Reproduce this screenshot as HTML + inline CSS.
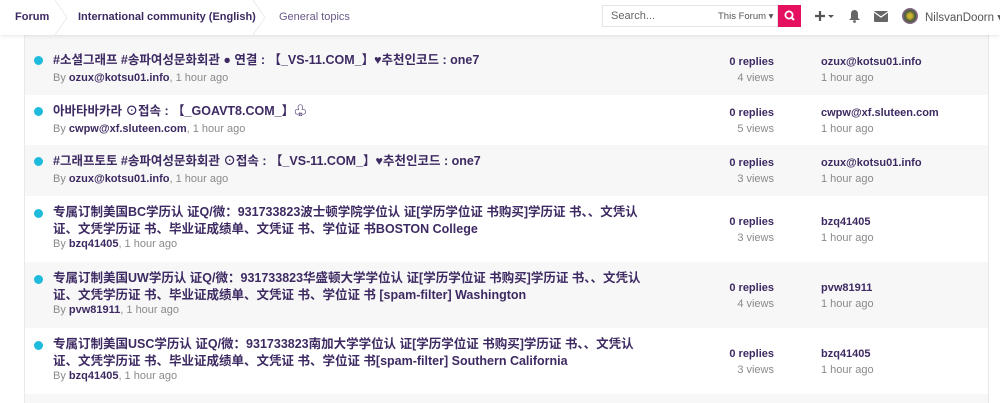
<!DOCTYPE html>
<html><head><meta charset="utf-8">
<style>
*{margin:0;padding:0;box-sizing:border-box}
body{width:1000px;height:403px;overflow:hidden;background:#fff;font-family:"Liberation Sans","Noto Sans CJK SC","NanumGothic",sans-serif;position:relative}
.hdr{position:absolute;left:0;top:0;width:1000px;height:35px;background:#fff;box-shadow:0 1px 4px rgba(0,0,0,.1);z-index:5}
.bc{position:absolute;top:11px;font-size:11px;color:#3d2a62;font-weight:bold;white-space:nowrap}
.chev{position:absolute;top:0;width:14px;height:35px}
.wrap{position:absolute;left:24px;top:35px;width:965px;height:368px;background:#f7f7f7;border-left:1px solid #e9e9e9;border-right:1px solid #e9e9e9}
.row{position:absolute;left:0;width:963px}
.g{background:#f7f7f7}.w{background:#fff}
.dot{position:absolute;left:9px;width:9px;height:9px;border-radius:50%;background:#1ebbdc}
.t{position:absolute;left:28px;width:600px;font-size:12.5px;font-weight:bold;color:#3d2a62;line-height:16.5px}
.m{position:absolute;left:28px;font-size:11px;color:#8a8a8a;white-space:nowrap}
.m b{color:#3d2a62}
.r{position:absolute;right:214px;text-align:right;font-size:11px;line-height:16px;white-space:nowrap}
.r .a{color:#3d2a62;font-weight:bold}.r .b{color:#8a8a8a}
.l{position:absolute;left:796px;font-size:11px;line-height:16px;white-space:nowrap}
.l .a{color:#3d2a62;font-weight:bold}.l .b{color:#8a8a8a}
</style></head><body>
<div class="hdr">
<div class="bc" style="left:15px">Forum</div>
<svg class="chev" style="left:54px" viewBox="0 0 14 35"><path d="M1 0 L13 17.5 L1 35" fill="none" stroke="#ececec"/></svg>
<div class="bc" style="left:78px">International community (English)</div>
<svg class="chev" style="left:252px" viewBox="0 0 14 35"><path d="M1 0 L13 17.5 L1 35" fill="none" stroke="#ececec"/></svg>
<div class="bc" style="left:279px;font-weight:normal;color:#6a5a8a">General topics</div>
<div style="position:absolute;left:602px;top:5px;width:176px;height:22px;border:1px solid #e4e4e4;background:#fff">
<span style="position:absolute;left:8px;top:4px;font-size:11px;color:#666">Search...</span>
<span style="position:absolute;left:115px;top:5px;font-size:9.5px;color:#555">This Forum ▾</span></div>
<div style="position:absolute;left:778px;top:5px;width:23px;height:22px;background:#e5105f">
<svg width="23" height="22" viewBox="0 0 23 22"><circle cx="11" cy="10" r="3.6" fill="none" stroke="#fff" stroke-width="1.8"/><path d="M13.6 12.6 L16 15" stroke="#fff" stroke-width="2"/></svg></div>
<svg style="position:absolute;left:815px;top:9px" width="22" height="14" viewBox="0 0 22 14"><path d="M5 2v10M0 7h10" stroke="#555" stroke-width="2.2"/><path d="M13 6l3 3 3-3z" fill="#555"/></svg>
<svg style="position:absolute;left:848px;top:9px" width="13" height="14" viewBox="0 0 13 14"><path d="M6.5 1C4 1 3 3 3 5v4L1 11h11l-2-2V5c0-2-1-4-3.5-4z" fill="#666"/><circle cx="6.5" cy="12.5" r="1.4" fill="#666"/></svg>
<svg style="position:absolute;left:874px;top:11px" width="14" height="11" viewBox="0 0 14 11"><rect width="14" height="11" rx="1" fill="#666"/><path d="M0 1l7 5 7-5" fill="none" stroke="#fff" stroke-width="1.2"/></svg>
<div style="position:absolute;left:902px;top:8px;width:16px;height:16px;border-radius:50%;background:radial-gradient(circle,#c8b030 20%,#4a5a3a 45%,#8a6a90 70%,#b0a040 100%)"></div>
<span style="position:absolute;left:925px;top:10px;font-size:11.5px;color:#555;white-space:nowrap">NilsvanDoorn ▾</span>
</div>

<div class="wrap">
<div class="row g" style="top:9px;height:51px">
<div class="dot" style="top:12px"></div>
<div class="t" style="top:8px">#소셜그래프 #송파여성문화회관 ● 연결 : 【_VS-11.COM_】♥추천인코드 : one7</div>
<div class="m" style="top:28px">By <b>ozux@kotsu01.info</b>, 1 hour ago</div>
<div class="r" style="top:10px"><div class="a">0 replies</div><div class="b">4 views</div></div>
<div class="l" style="top:10px"><div class="a">ozux@kotsu01.info</div><div class="b">1 hour ago</div></div>
</div>
<div class="row w" style="top:60px;height:50px">
<div class="dot" style="top:12px"></div>
<div class="t" style="top:8px">아바타바카라 ⊙접속 : 【_GOAVT8.COM_】♧</div>
<div class="m" style="top:28px">By <b>cwpw@xf.sluteen.com</b>, 1 hour ago</div>
<div class="r" style="top:10px"><div class="a">0 replies</div><div class="b">5 views</div></div>
<div class="l" style="top:10px"><div class="a">cwpw@xf.sluteen.com</div><div class="b">1 hour ago</div></div>
</div>
<div class="row g" style="top:110px;height:51px">
<div class="dot" style="top:12px"></div>
<div class="t" style="top:8px">#그래프토토 #송파여성문화회관 ⊙접속 : 【_VS-11.COM_】♥추천인코드 : one7</div>
<div class="m" style="top:28px">By <b>ozux@kotsu01.info</b>, 1 hour ago</div>
<div class="r" style="top:10px"><div class="a">0 replies</div><div class="b">3 views</div></div>
<div class="l" style="top:10px"><div class="a">ozux@kotsu01.info</div><div class="b">1 hour ago</div></div>
</div>
<div class="row w" style="top:161px;height:66px">
<div class="dot" style="top:13px"></div>
<div class="t" style="top:8px">专属订制美国BC学历认 证Q/微：931733823波士顿学院学位认 证[学历学位证 书购买]学历证 书、、文凭认证、文凭学历证 书、毕业证成绩单、文凭证 书、学位证 书BOSTON College</div>
<div class="m" style="top:42px">By <b>bzq41405</b>, 1 hour ago</div>
<div class="r" style="top:18px"><div class="a">0 replies</div><div class="b">3 views</div></div>
<div class="l" style="top:18px"><div class="a">bzq41405</div><div class="b">1 hour ago</div></div>
</div>
<div class="row g" style="top:227px;height:66px">
<div class="dot" style="top:13px"></div>
<div class="t" style="top:8px">专属订制美国UW学历认 证Q/微：931733823华盛顿大学学位认 证[学历学位证 书购买]学历证 书、、文凭认证、文凭学历证 书、毕业证成绩单、文凭证 书、学位证 书 [spam-filter] Washington</div>
<div class="m" style="top:42px">By <b>pvw81911</b>, 1 hour ago</div>
<div class="r" style="top:18px"><div class="a">0 replies</div><div class="b">4 views</div></div>
<div class="l" style="top:18px"><div class="a">pvw81911</div><div class="b">1 hour ago</div></div>
</div>
<div class="row w" style="top:293px;height:66px">
<div class="dot" style="top:13px"></div>
<div class="t" style="top:8px">专属订制美国USC学历认 证Q/微：931733823南加大学学位认 证[学历学位证 书购买]学历证 书、、文凭认证、文凭学历证 书、毕业证成绩单、文凭证 书、学位证 书[spam-filter] Southern California</div>
<div class="m" style="top:42px">By <b>bzq41405</b>, 1 hour ago</div>
<div class="r" style="top:18px"><div class="a">0 replies</div><div class="b">3 views</div></div>
<div class="l" style="top:18px"><div class="a">bzq41405</div><div class="b">1 hour ago</div></div>
</div>
</div>
</body></html>
